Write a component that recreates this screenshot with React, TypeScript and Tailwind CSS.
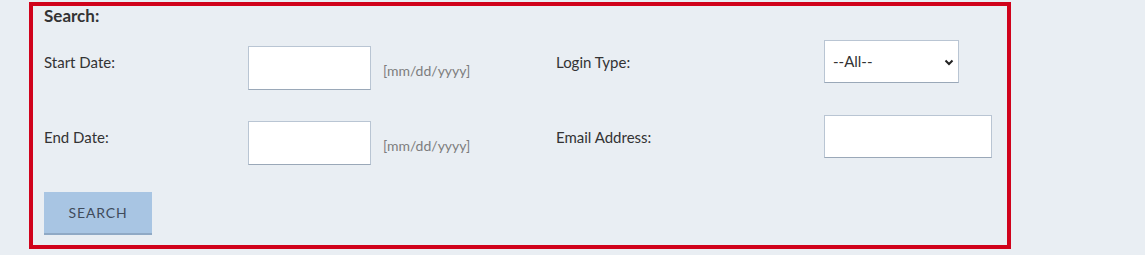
import React from 'react'

const labelCls = 'mt-[12px] text-[15px] leading-[20px] text-[#333]'
const inputCls =
  'block h-[44px] w-[123px] border border-[#b9c5d3] border-b-[#9aa8b8] bg-white px-2 outline-none'

const DateField = () => (
  <div className="flex items-start gap-3">
    <input type="text" className={`mt-[6px] ${inputCls}`} />
    <span className="mt-[21px] text-[14px] leading-[20px] text-[#7d7d7d]">[mm/dd/yyyy]</span>
  </div>
)

const App = () => {
  return (
    <div className="h-[255px] w-full bg-[#e9eef3] pt-[2px] font-['Lato',sans-serif]">
      <div className="ml-[29px] h-[247px] w-[982px] border-4 border-[#d0021b] pl-[11px]">
        <h3 className="text-[17px] font-bold leading-[20px] text-[#333]">Search:</h3>

        <div className="mt-[14px] grid grid-cols-[204px_308px_268px_auto] grid-rows-[75px_75px] items-start">
          <label className={labelCls}>Start Date:</label>
          <DateField />
          <label className={labelCls}>Login Type:</label>
          <div className="relative w-[135px]">
            <select className="block h-[43px] w-[135px] appearance-none border border-[#b9c5d3] border-b-[#9aa8b8] bg-white pl-[8px] text-[15px] text-[#333] outline-none">
              <option>--All--</option>
            </select>
            <svg
              className="pointer-events-none absolute right-[5px] top-[19px]"
              width="10"
              height="7"
              viewBox="0 0 10 7"
            >
              <path d="M1.5 1.5 L5 5 L8.5 1.5" fill="none" stroke="#222" strokeWidth="2" />
            </svg>
          </div>

          <label className={labelCls}>End Date:</label>
          <DateField />
          <label className={labelCls}>Email Address:</label>
          <input
            type="text"
            className="block h-[43px] w-[168px] border border-[#b9c5d3] border-b-[#9aa8b8] bg-white px-2 outline-none"
          />
        </div>

        <button className="mt-[2px] h-[43px] w-[108px] border-b-2 border-[#8fa9c5] bg-[#a8c5e3] text-[14px] tracking-[0.06em] text-[#3f4b5b]">
          SEARCH
        </button>
      </div>
    </div>
  )
}

export default App
